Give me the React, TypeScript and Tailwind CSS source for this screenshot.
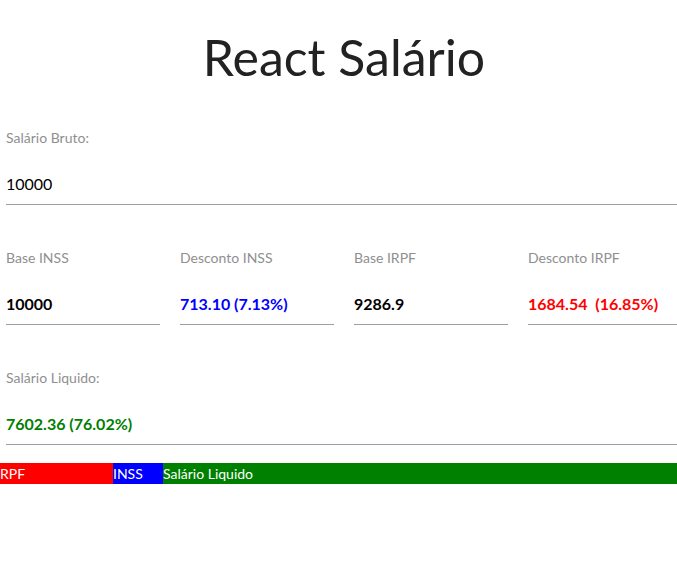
import React from 'react';

const font = { fontFamily: 'Lato, "Noto Sans", sans-serif' };

function Field({ label, value, valueClass }: { label: string; value: string; valueClass: string }) {
  return (
    <div className="flex flex-col">
      <label className="text-[14px] text-[#8f8f8f] h-[14px] leading-[14px]">{label}</label>
      <div className={`mt-[29px] h-[31px] border-b border-[#9e9e9e] text-[16px] leading-[20px] ${valueClass}`}>
        {value}
      </div>
    </div>
  );
}

export default function App() {
  return (
    <div className="w-[677px] h-[580px] bg-white overflow-hidden" style={font}>
      <div className="w-[688px]">
        <h1 className="text-center text-[50px] font-normal text-[#222] leading-[64px] pt-[25px]">React Salário</h1>

        <div className="pl-[6px] mt-[42px]">
          {/* salário bruto */}
          <Field label="Salário Bruto:" value="10000" valueClass="text-black" />

          {/* bases e descontos */}
          <div className="grid grid-cols-[154px_154px_154px_1fr] gap-5 mt-[46px]">
            <Field label="Base INSS" value="10000" valueClass="font-bold text-black" />
            <Field label="Desconto INSS" value="713.10 (7.13%)" valueClass="font-bold text-[#0000ff]" />
            <Field label="Base IRPF" value="9286.9" valueClass="font-bold text-black" />
            <Field label="Desconto IRPF" value="1684.54  (16.85%)" valueClass="font-bold text-[#ff0000] whitespace-pre" />
          </div>

          <div className="mt-[46px]">
            <Field label="Salário Liquido:" value="7602.36 (76.02%)" valueClass="font-bold text-[#008000]" />
          </div>
        </div>

        {/* barra */}
        <div className="flex mt-[18px] h-[21px] text-[14px] leading-[21px] text-white">
          <div className="bg-[#ff0000] overflow-hidden w-[113px]">RPF</div>
          <div className="bg-[#0000ff] overflow-hidden w-[50px]">INSS</div>
          <div className="bg-[#008000] flex-1">Salário Liquido</div>
        </div>
      </div>
    </div>
  );
}
